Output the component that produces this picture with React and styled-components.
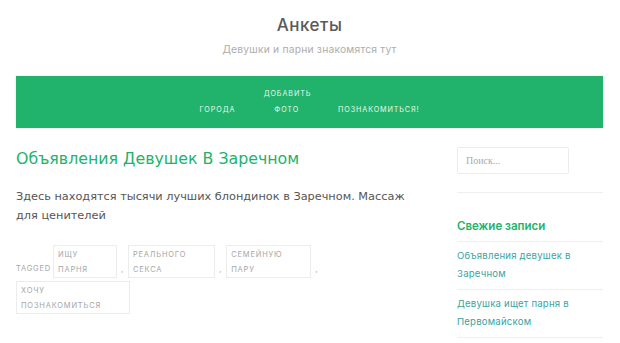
import React from "react";
import styled, { createGlobalStyle } from "styled-components";

const GlobalStyle = createGlobalStyle`
    html, body {
        margin: 0;
        padding: 0;
        background: #fff;
    }
    body {
        font-family: "DejaVu Sans", sans-serif;
    }
`;

const tags = ["Ищу парня", "Реального секса", "Семейную пару", "Хочу познакомиться"];
const recent = ["Объявления девушек в Заречном", "Девушка ищет парня в Первомайском"];

const App = () => {
    return (
        <>
            <GlobalStyle />
            <StyledPage>
                <StyledBranding>
                    <StyledSiteTitle>Анкеты</StyledSiteTitle>
                    <StyledSiteDesc>Девушки и парни знакомятся тут</StyledSiteDesc>
                </StyledBranding>
                <StyledNav>
                    <StyledNavRow offset>
                        <StyledNavItem>Добавить</StyledNavItem>
                    </StyledNavRow>
                    <StyledNavRow>
                        <StyledNavItem>Города</StyledNavItem>
                        <StyledNavItem>Фото</StyledNavItem>
                        <StyledNavItem>Познакомиться!</StyledNavItem>
                    </StyledNavRow>
                </StyledNav>
                <StyledContent>
                    <StyledMain>
                        <StyledEntryTitle>Объявления Девушек В Заречном</StyledEntryTitle>
                        <StyledEntryText>
                            Здесь находятся тысячи лучших блондинок в Заречном. Массаж для ценителей
                        </StyledEntryText>
                        <StyledTags>
                            <StyledTagged>Tagged</StyledTagged>
                            {tags.map((t, i) => (
                                <React.Fragment key={t}>
                                    <StyledTag>{t}</StyledTag>
                                    {i < tags.length - 1 && <StyledComma>,</StyledComma>}
                                </React.Fragment>
                            ))}
                        </StyledTags>
                    </StyledMain>
                    <StyledSidebar>
                        <StyledSearch placeholder="Поиск..." />
                        <StyledDivider />
                        <StyledWidgetTitle>Свежие записи</StyledWidgetTitle>
                        <StyledList>
                            {recent.map((r) => (
                                <StyledListItem key={r}>
                                    <StyledLink href="#">{r}</StyledLink>
                                </StyledListItem>
                            ))}
                        </StyledList>
                    </StyledSidebar>
                </StyledContent>
            </StyledPage>
        </>
    );
};

const StyledPage = styled.div`
    width: 620px;
    padding: 0 17px 0 16px;
    box-sizing: border-box;
`;
const StyledBranding = styled.header`
    display: flex;
    flex-direction: column;
    align-items: center;
    padding-top: 14px;
    height: 76px;
    box-sizing: border-box;
`;
const StyledSiteTitle = styled.h1`
    margin: 0;
    font-family: "Inter", "Noto Sans", sans-serif;
    font-weight: 500;
    font-size: 17px;
    line-height: 22px;
    color: #595959;
    letter-spacing: 0.5px;
`;
const StyledSiteDesc = styled.p`
    margin: 6px 0 0 0;
    font-family: "Inter", "Noto Sans", sans-serif;
    font-size: 10.3px;
    line-height: 14px;
    color: #adadad;
    letter-spacing: 0.2px;
`;
const StyledNav = styled.nav`
    background: #21b36b;
    height: 52px;
    display: flex;
    flex-direction: column;
    justify-content: center;
    gap: 4px;
    box-shadow: 0 0 2px rgba(0, 0, 0, 0.12);
`;
const StyledNavRow = styled.div`
    display: flex;
    justify-content: center;
    gap: 39px;
    padding-right: ${(p) => (p.offset ? "44px" : "0")};
`;
const StyledNavItem = styled.span`
    font-family: "Inter", "Noto Sans", sans-serif;
    font-size: 7.2px;
    line-height: 12px;
    letter-spacing: 0.9px;
    text-transform: uppercase;
    color: #e6f6ed;
`;
const StyledContent = styled.div`
    display: flex;
    justify-content: space-between;
    padding-top: 19px;
`;
const StyledMain = styled.main`
    width: 400px;
`;
const StyledEntryTitle = styled.h2`
    margin: 0;
    font-weight: normal;
    font-size: 15.8px;
    line-height: 24px;
    color: #21b36b;
`;
const StyledEntryText = styled.p`
    margin: 16px 0 0 0;
    font-size: 11.3px;
    line-height: 19px;
    color: #555;
`;
const StyledTags = styled.div`
    display: flex;
    flex-wrap: wrap;
    align-items: flex-end;
    row-gap: 3px;
    margin-top: 20px;
    width: 330px;
    font-family: "Inter", "Noto Sans", sans-serif;
    font-size: 7.5px;
    letter-spacing: 0.8px;
    text-transform: uppercase;
    color: #a6a6a6;
`;
const StyledTagged = styled.span`
    line-height: 15px;
    padding-bottom: 2px;
    margin-right: 2px;
`;
const StyledTag = styled.span`
    border: 1px solid #ececec;
    padding: 1px 28px 0 4px;
    line-height: 15px;
    width: min-content;
`;
const StyledComma = styled.span`
    line-height: 15px;
    padding: 0 4px 1px 4px;
`;
const StyledSidebar = styled.aside`
    width: 146px;
`;
const StyledSearch = styled.input`
    display: block;
    width: 112px;
    height: 27px;
    box-sizing: border-box;
    border: 1px solid #ececec;
    border-radius: 2px;
    padding: 0 8px;
    font-family: "Liberation Serif", serif;
    font-size: 10px;
    color: #999;
    outline: none;
    &::placeholder {
        color: #aaa;
    }
`;
const StyledDivider = styled.hr`
    margin: 18px 0 0 0;
    border: none;
    border-top: 1px solid #efefef;
`;
const StyledWidgetTitle = styled.h3`
    margin: 25px 0 0 0;
    font-family: "Inter", "Noto Sans", sans-serif;
    font-weight: 600;
    font-size: 11.5px;
    line-height: 16px;
    color: #21b36b;
`;
const StyledList = styled.ul`
    list-style: none;
    margin: 7px 0 0 0;
    padding: 0;
    border-top: 1px solid #efefef;
`;
const StyledListItem = styled.li`
    padding: 5px 0 6px 0;
    border-bottom: 1px solid #efefef;
    font-family: "Inter", "Noto Sans", sans-serif;
    font-size: 9.6px;
    line-height: 18px;
`;
const StyledLink = styled.a`
    color: #3aa3a3;
    text-decoration: none;
    letter-spacing: 0.2px;
`;

export default App;
